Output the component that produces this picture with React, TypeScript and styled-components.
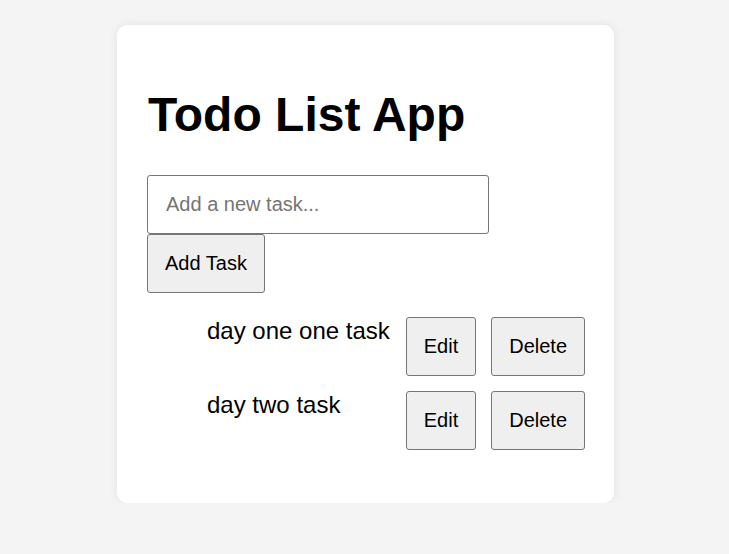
import React, { useState } from "react";
import styled, { createGlobalStyle } from "styled-components";

const GlobalStyle = createGlobalStyle`
  html, body {
    margin: 0;
    padding: 0;
    background: #f4f4f4;
    font-family: "Liberation Sans", Arial, sans-serif;
  }
  * { box-sizing: border-box; }
`;

const Page = styled.div`
  padding: 25px 0 0 2px;
  display: flex;
  justify-content: center;
`;

const Card = styled.div`
  width: 497px;
  background: #ffffff;
  border-radius: 10px;
  box-shadow: 0 0 10px rgba(0, 0, 0, 0.08);
  padding: 32px 29px 29px 30px;
`;

const Title = styled.h1`
  font-size: 48px;
  font-weight: 700;
  color: #000;
  margin: 30px 0 33px 1px;
  line-height: normal;
`;

const Input = styled.input`
  display: block;
  width: 342px;
  height: 59px;
  padding: 0 18px;
  font-family: "Liberation Sans", Arial, sans-serif;
  font-size: 20px;
  color: #000;
  border: 1px solid #767676;
  border-radius: 3px;
  background: #fff;
  outline: none;
  &::placeholder {
    color: #757575;
  }
`;

const Button = styled.button<{ $pad?: number }>`
  display: inline-block;
  height: 59px;
  padding: 0 ${(p) => p.$pad ?? 17}px;
  font-family: "Liberation Sans", Arial, sans-serif;
  font-size: 20px;
  color: #000;
  background: #efefef;
  border: 1px solid #767676;
  border-radius: 3px;
  cursor: pointer;
`;

const List = styled.ul`
  list-style: none;
  margin: 24px 0;
  padding: 0 0 0 40px;
  font-size: 24px;
`;

const Item = styled.li`
  display: flex;
  align-items: flex-start;
  padding-left: 20px;
  & + & {
    margin-top: 15px;
  }
`;

const ItemText = styled.span`
  flex: 1;
  white-space: nowrap;
  line-height: normal;
`;

const ItemButton = styled(Button)`
  margin-left: 15px;
`;

export default function App() {
  const [tasks] = useState(["day one one task", "day two task"]);
  return (
    <>
      <GlobalStyle />
      <Page>
        <Card>
          <Title>Todo List App</Title>
          <Input placeholder="Add a new task..." />
          <Button $pad={17}>Add Task</Button>
          <List>
            {tasks.map((t) => (
              <Item key={t}>
                <ItemText>{t}</ItemText>
                <ItemButton>Edit</ItemButton>
                <ItemButton>Delete</ItemButton>
              </Item>
            ))}
          </List>
        </Card>
      </Page>
    </>
  );
}
